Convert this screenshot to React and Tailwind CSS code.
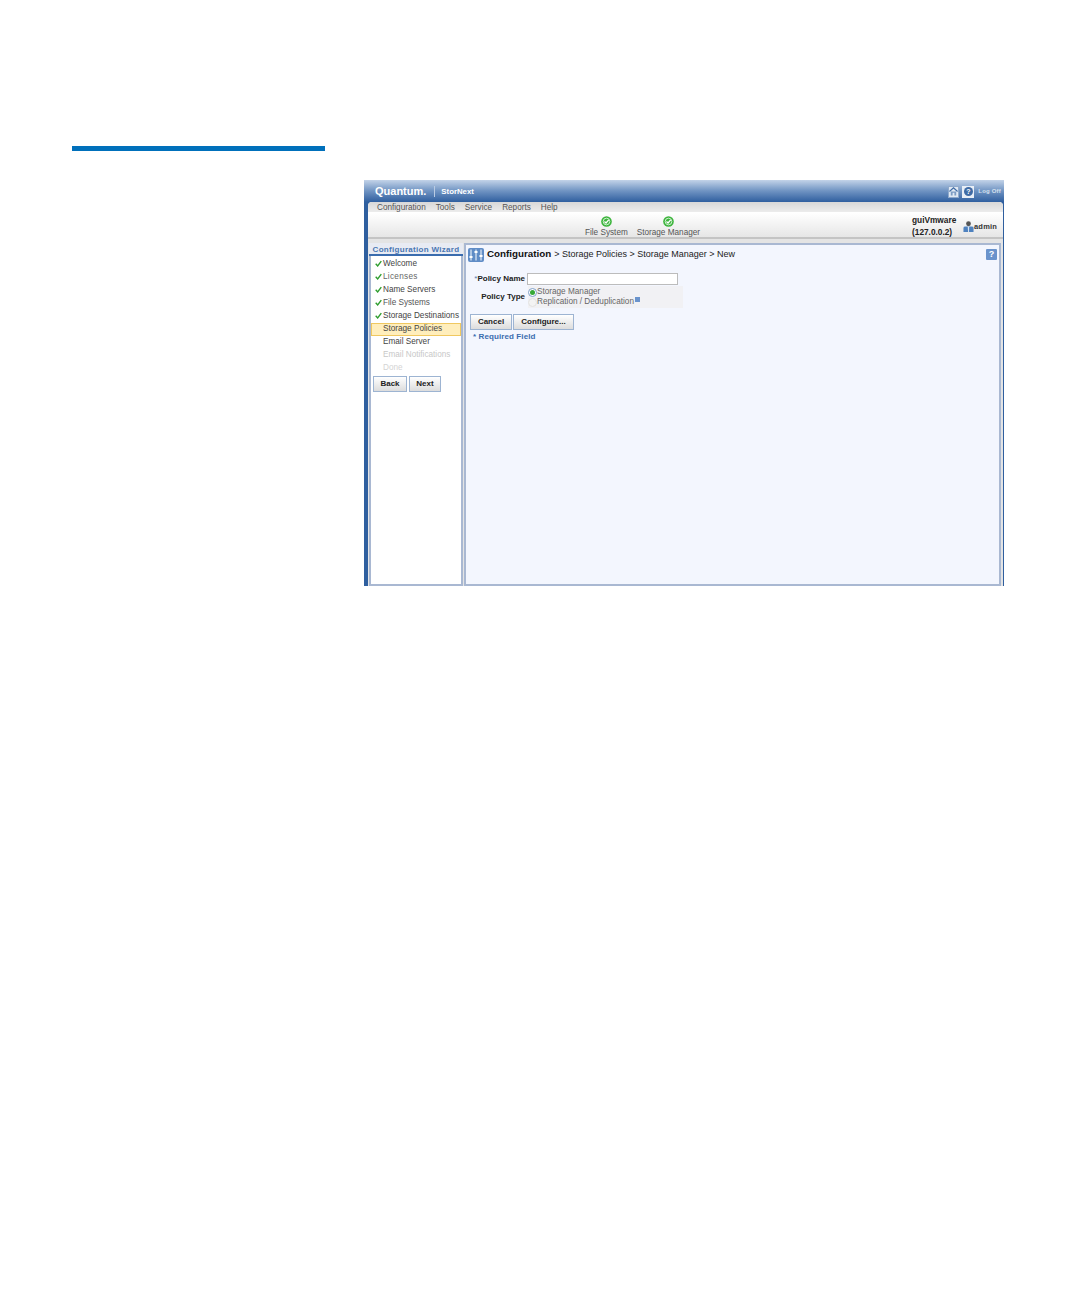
import React from 'react';

const font = { fontFamily: '"Liberation Sans", Arial, sans-serif' };

const wizardSteps = [
  { label: 'Welcome', done: true, cls: 'text-[#444]' },
  { label: 'Licenses', done: true, cls: 'text-[#666] text-[7.5px] tracking-[0.3px]' },
  { label: 'Name Servers', done: true, cls: 'text-[#444]' },
  { label: 'File Systems', done: true, cls: 'text-[#555]' },
  { label: 'Storage Destinations', done: true, cls: 'text-[#444]' },
  { label: 'Storage Policies', active: true, cls: 'text-[#444]' },
  { label: 'Email Server', cls: 'text-[#444]' },
  { label: 'Email Notifications', cls: 'text-[#c8c8c8]' },
  { label: 'Done', cls: 'text-[#d4d4d4]' },
];

const Check = () => (
  <svg viewBox="0 0 10 10" className="w-[7px] h-[7px] shrink-0 -mt-[3px]">
    <path d="M1 5.5 L3.8 8.5 L9 1.5" fill="none" stroke="#2f9e2f" strokeWidth="2" />
  </svg>
);

const StatusIcon = () => (
  <svg viewBox="0 0 12 12" className="w-[11px] h-[11px]">
    <circle cx="6" cy="6" r="5.8" fill="#3eb53e" />
    <circle cx="6" cy="6" r="3.6" fill="none" stroke="#d9f2d9" strokeWidth="1" />
    <path d="M3.8 6 L5.5 7.6 L8.4 4.2" fill="none" stroke="#fff" strokeWidth="1.4" />
  </svg>
);

const ConfigIcon = () => (
  <svg viewBox="0 0 16 14" className="w-[16px] h-[14px] shrink-0">
    <rect width="16" height="14" rx="2" fill="#5f8cc6" />
    <path d="M3 1.5 V12.5 M8 1.5 V12.5 M13 1.5 V12.5" stroke="#fff" strokeWidth="1" />
    <path d="M1.5 9 H4.5 M6.5 4 H9.5 M11.5 8 H14.5" stroke="#fff" strokeWidth="2" />
  </svg>
);

const Btn = ({ children, className = '' }) => (
  <div className={`h-[16px] flex items-center justify-center border border-[#9db4d2] bg-gradient-to-b from-white to-[#dcdcdc] text-[8px] font-bold text-[#222] ${className}`}>
    {children}
  </div>
);

const StatusItem = ({ label }) => (
  <div className="flex flex-col items-center">
    <StatusIcon />
    <span className="text-[8.2px] leading-[10px] text-[#555] mt-[1px]">{label}</span>
  </div>
);

export default function App() {
  return (
    <div className="relative w-[1081px] h-[1297px] bg-white overflow-hidden" style={font}>
      <div className="h-[146px]" />
      <div className="ml-[72px] w-[253px] h-[5px] bg-[#0070bb]" />

      <div className="ml-[364px] mt-[29px] w-[640px] h-[406px] flex flex-col bg-[#2f5f9f]">
        {/* top banner */}
        <div className="h-[22px] shrink-0 flex items-center pl-[11px] pr-[3px] pt-[1px] bg-gradient-to-b from-[#c3d3e8] via-[#6f93c2] to-[#2f5f9f]">
          <span className="text-[11px] font-bold text-white">Quantum.</span>
          <span className="w-px h-[11px] bg-[#b9cbe3] ml-[8px] mr-[6px]" />
          <span className="text-[7.8px] font-bold text-white">StorNext</span>
          <div className="ml-auto flex items-center gap-[3px]">
            <div className="w-[11px] h-[12px] bg-[#dfe8f3] border border-[#8fa9cb] flex items-center justify-center">
              <svg viewBox="0 0 10 10" className="w-[9px] h-[9px]">
                <path d="M0.5 5 L5 1 L9.5 5" fill="none" stroke="#3f6ba5" strokeWidth="1.3" />
                <path d="M2 5 V9.5 H4 V6.5 H6 V9.5 H8 V5" fill="#7d9cc4" />
              </svg>
            </div>
            <div className="w-[12px] h-[12px] bg-[#e8eef6] flex items-center justify-center">
              <span className="w-[9px] h-[9px] rounded-full bg-[#3f6ba5] text-white text-[7px] font-bold leading-[9px] text-center">?</span>
            </div>
            <span className="text-[6px] font-bold text-[#d5e0ee] ml-[1px] tracking-[0.2px]">Log Off</span>
          </div>
        </div>

        {/* inner window */}
        <div className="flex-1 min-h-0 ml-[4px] mr-[1px] flex flex-col bg-white rounded-t-[4px]">
          <div className="h-[10px] shrink-0 flex items-center pl-[9px] pt-[2px] gap-[10px] rounded-t-[4px] bg-gradient-to-b from-[#d8d8d8] to-[#ececec] text-[8.2px] text-[#555]">
            <span>Configuration</span>
            <span>Tools</span>
            <span>Service</span>
            <span>Reports</span>
            <span>Help</span>
          </div>
          <div className="relative h-[27px] shrink-0 border-t border-white border-b-[2px] border-b-[#c4c4c4] bg-gradient-to-b from-white to-[#e6e6e6]">
            <div className="flex justify-center gap-[9px] pt-[3px] w-[549px]">
              <StatusItem label="File System" />
              <StatusItem label="Storage Manager" />
            </div>
            <div className="absolute left-[544px] top-[1px] text-[8.3px] leading-[12px] font-bold text-[#222]">
              <div>guiVmware</div>
              <div>(127.0.0.2)</div>
            </div>
            <div className="absolute left-[595px] top-[8px] flex items-center">
              <svg viewBox="0 0 12 12" className="w-[11px] h-[11px]">
                <circle cx="6" cy="3" r="2.6" fill="#555" />
                <path d="M0.5 12 V7.5 Q0.5 6 2.5 6 H9.5 Q11.5 6 11.5 7.5 V12 Z" fill="#4f82bf" />
                <path d="M5.2 6 H6.8 L6.5 12 H5.5 Z" fill="#d8e4f1" />
              </svg>
              <span className="text-[7.5px] font-bold text-[#333] tracking-[0.2px]">admin</span>
            </div>
          </div>

          <div className="flex-1 min-h-0 flex bg-[#e4e4e4] pt-[4px] pl-[1px]">
            {/* wizard sidebar */}
            <div className="w-[94px] shrink-0 flex flex-col border-x-[2px] border-b-[2px] border-[#a9b8d2] bg-white mr-[1px]">
              <div className="h-[13px] -mx-[2px] flex items-end justify-center bg-[#e8ebf3] border-b-[2px] border-[#3a6cae] text-[8px] font-bold text-[#4a76b2] leading-[9px] tracking-[0.3px]">
                Configuration Wizard
              </div>
              <div className="mt-[2px] flex flex-col">
                {wizardSteps.map((s) => (
                  <div
                    key={s.label}
                    className={`h-[13px] flex items-center text-[8.2px] whitespace-nowrap ${s.active ? 'pl-[11px] bg-[#ffeebc] border border-[#f0c860]' : 'pl-[4px]'} ${s.cls}`}
                  >
                    {!s.active && (s.done ? <Check /> : <span className="w-[7px] shrink-0" />)}
                    {!s.active && <span className="w-[1px] shrink-0" />}
                    {s.label}
                  </div>
                ))}
              </div>
              <div className="flex gap-[2px] ml-[2px] mt-[1px]">
                <Btn className="w-[34px]">Back</Btn>
                <Btn className="w-[32px]">Next</Btn>
              </div>
            </div>

            {/* content panel */}
            <div className="flex-1 min-w-0 mr-[2px] border-[2px] border-[#a9b8d2] bg-[#f3f6fe] flex flex-col pl-[2px]">
              <div className="flex items-center h-[17px] mt-[1px] pr-[2px]">
                <ConfigIcon />
                <span className="ml-[3px] text-[9.8px] font-bold text-[#111]">Configuration</span>
                <span className="ml-[3px] text-[9px] text-[#222] whitespace-nowrap">&gt; Storage Policies &gt; Storage Manager &gt; New</span>
                <div className="ml-auto w-[11px] h-[11px] bg-[#6a93cc] rounded-[1px] text-white text-[9px] font-bold leading-[11px] text-center">?</div>
              </div>

              <div className="flex items-center mt-[10px]">
                <span className="w-[57px] text-right text-[8px] font-bold text-[#222] whitespace-nowrap"><span className="text-[#4a76b2] font-normal">*</span>Policy Name</span>
                <div className="ml-[2px] w-[151px] h-[12px] border border-[#bcbcbc] bg-white" />
              </div>

              <div className="flex mt-[1px] items-center">
                <span className="w-[57px] text-right text-[8px] font-bold text-[#222]">Policy Type</span>
                <div className="ml-[3px] w-[155px] h-[22px] pt-[1px] bg-[#f1f1f4] text-[8.2px] leading-[10px] text-[#666]">
                  <div className="flex items-center h-[10px]">
                    <span className="w-[9px] h-[9px] rounded-full border border-[#7fa0c8] bg-white flex items-center justify-center shrink-0">
                      <span className="w-[5px] h-[5px] rounded-full bg-[#35a835]" />
                    </span>
                    Storage Manager
                  </div>
                  <div className="flex items-center h-[10px]">
                    <span className="w-[9px] h-[9px] rounded-full border border-[#e2e2e2] bg-[#f3f3f3] shrink-0" />
                    Replication / Deduplication
                    <span className="w-[5px] h-[5px] bg-[#6a93cc] ml-[1px] -mt-[6px]" />
                  </div>
                </div>
              </div>

              <div className="flex gap-[1px] mt-[6px] ml-[2px]">
                <Btn className="w-[42px]">Cancel</Btn>
                <Btn className="w-[61px]">Configure...</Btn>
              </div>
              <div className="mt-[1px] ml-[5px] text-[8px] font-bold text-[#3a6cae] leading-[11px] tracking-[0.1px]">* Required Field</div>
            </div>
          </div>
        </div>
      </div>
    </div>
  );
}
